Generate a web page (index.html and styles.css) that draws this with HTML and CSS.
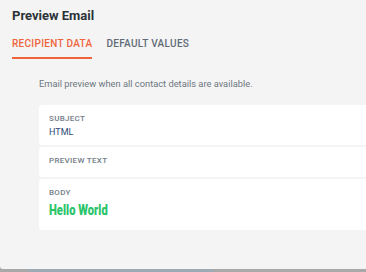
FILE: index.html
```html
<!DOCTYPE html>
<html>
<head>
<meta charset="utf-8">
<link rel="stylesheet" href="styles.css">
</head>
<body>
<div class="panel">
  <div class="header">
    <h1 class="title">Preview Email</h1>
    <div class="tabs">
      <div class="tab active">RECIPIENT DATA</div>
      <div class="tab">DEFAULT VALUES</div>
    </div>
  </div>
  <div class="content">
    <p class="desc">Email preview when all contact details are available.</p>
    <div class="cards">
      <div class="card">
        <div class="label">SUBJECT</div>
        <div class="value">HTML</div>
      </div>
      <div class="card card-empty">
        <div class="label">PREVIEW TEXT</div>
      </div>
      <div class="card card-body">
        <div class="label">BODY</div>
        <div class="hello"><span class="hello-text">Hello World</span></div>
      </div>
    </div>
  </div>
</div>
<div class="backdrop">
  <div class="bd bd-a"></div>
  <div class="bd bd-b"></div>
  <div class="bd bd-c"></div>
</div>
</body>
</html>
```
FILE: styles.css
```css
html, body {
  margin: 0;
  padding: 0;
  width: 366px;
  height: 272px;
  overflow: hidden;
  background: #a9a9a9;
  font-family: Roboto, "Liberation Sans", sans-serif;
}
.panel {
  height: 269px;
  background: #f4f4f4;
  border-bottom-left-radius: 3px;
  overflow: hidden;
  display: flex;
  flex-direction: column;
}
.header {
  padding: 8px 0 0 12px;
}
.title {
  margin: 0;
  font-size: 13px;
  line-height: 16px;
  font-weight: 700;
  color: #2c3338;
}
.tabs {
  display: flex;
  gap: 14px;
  padding-top: 14px;
}
.tab {
  font-size: 10px;
  line-height: 12px;
  font-weight: 500;
  letter-spacing: 0.3px;
  color: #5f6b77;
  padding-bottom: 7px;
  border-bottom: 2px solid transparent;
}
.tab.active {
  color: #f0643c;
  border-bottom-color: #f0643c;
}
.content {
  padding: 19px 0 0 39px;
  width: 400px;
}
.desc {
  margin: 0 0 15px;
  font-size: 9.3px;
  line-height: 12px;
  color: #6d7781;
}
.cards {
  display: flex;
  flex-direction: column;
  gap: 2px;
}
.card {
  background: #ffffff;
  border-radius: 3px;
  padding: 9px 10px 7px;
}
.card-empty {
  padding-bottom: 11px;
}
.card-body {
  padding-bottom: 12px;
}
.label {
  font-size: 8px;
  line-height: 10px;
  font-weight: 500;
  letter-spacing: 0.3px;
  color: #737d87;
}
.value {
  margin-top: 2px;
  font-size: 9px;
  line-height: 12px;
  color: #2d4a73;
}
.hello {
  margin-top: 4px;
  font-size: 14px;
  line-height: 16px;
}
.hello-text {
  display: inline-block;
  font-family: Impact, "Liberation Sans Narrow", Roboto, sans-serif;
  font-weight: 900;
  color: #2bc46a;
  transform: scaleX(0.8);
  transform-origin: left center;
}
.backdrop {
  display: flex;
  height: 3px;
}
.bd-a { width: 28px; background: #a8a8a8; }
.bd-b { width: 186px; background: #9eaab3; }
.bd-c { flex: 1; background: #a9a9a9; }
```
